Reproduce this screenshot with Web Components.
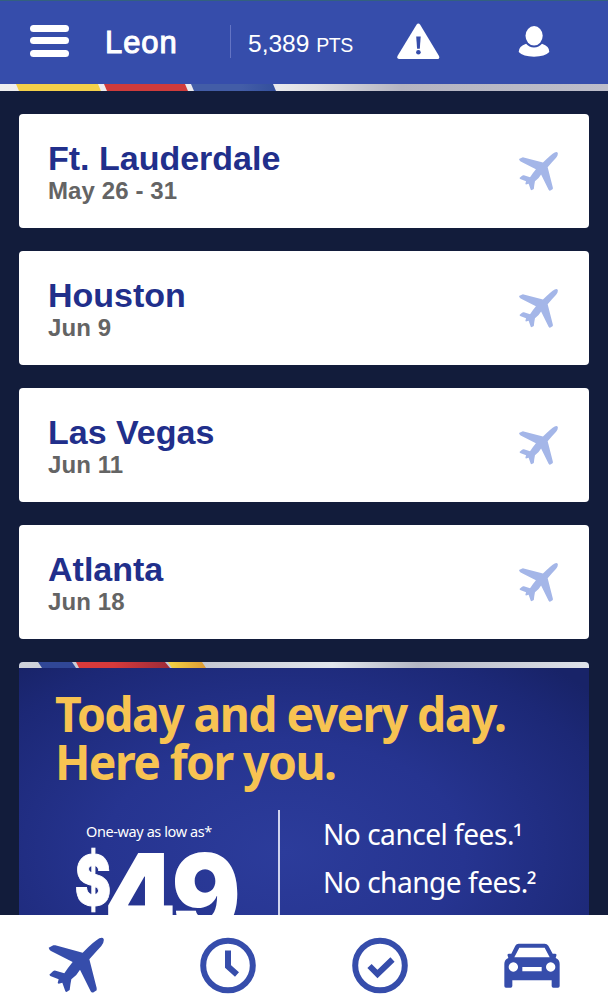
<!DOCTYPE html>
<html lang="en">
<head>
<meta charset="utf-8">
<title>Trips</title>
<style>
    body {
        background: #121c3b;
        font-family: "Liberation Sans", Arial, sans-serif;
        margin: 0;
    }
</style>
</head>
<body>
<trip-app>
    <app-header slot="header" name="Leon" points="5,389"></app-header>
    <trip-card city="Ft. Lauderdale" dates="May 26 - 31"></trip-card>
    <trip-card city="Houston" dates="Jun 9"></trip-card>
    <trip-card city="Las Vegas" dates="Jun 11"></trip-card>
    <trip-card city="Atlanta" dates="Jun 18"></trip-card>
    <promo-banner>
        <span slot="line1">Today and every day.</span>
        <span slot="line2">Here for you.</span>
    </promo-banner>
    <tab-bar slot="footer"></tab-bar>
</trip-app>

<script>
const PLANE_PATH = "M251 57Q248 51 238 55Q223 63 188 98L106 76Q103 75 100 76L86 83Q88 90 93 93L158 126Q144 143 133 160L107 152Q102 151 99 154L88 164L91 168L116 178L113 189L116 191L127 188L136 214Q139 218 143 214L149 210Q151 193 154 178Q170 167 180 149L212 214Q216 220 222 216L230 211L230 204L208 118Q229 94 244 78Q253 67 251 57Z";

class TripApp extends HTMLElement {
    constructor() {
        super();
        this.attachShadow({mode: 'open'});
        this.shadowRoot.innerHTML = `
<style>
    :host {
        display: flex;
        flex-direction: column;
        height: 1004px;
        overflow: hidden;
        width: 608px;
    }

    main {
        display: flex;
        flex: 1;
        flex-direction: column;
        gap: 23px;
        min-height: 0;
        overflow: hidden;
        padding: 23px 19px 0;
    }
</style>
<slot name="header"></slot>
<main><slot></slot></main>
<slot name="footer"></slot>`;
    }
}

class AppHeader extends HTMLElement {
    constructor() {
        super();
        this.attachShadow({mode: 'open'});
        this.shadowRoot.innerHTML = `
<style>
    :host {
        color: #fff;
        display: block;
        flex: none;
    }

    .bar {
        background: #364dab;
        border-top: 1px solid #33617f;
        box-sizing: border-box;
        display: grid;
        grid-template-columns: 30px 75px 125px 167px 121px auto;
        height: 84px;
    }

    .menu {
        display: grid;
        gap: 5.5px;
        grid-column: 2;
        grid-auto-rows: 7px;
        padding-top: 23.5px;
        width: 39px;
    }

    .menu i {
        background: #fff;
        border-radius: 4px;
    }

    .name {
        -webkit-text-stroke: 1px #fff;
        font-size: 31px;
        letter-spacing: 0.9px;
        line-height: 36px;
        padding-top: 24px;
    }

    .points {
        border-left: 1px solid #6474c4;
        font-size: 24.5px;
        height: 33px;
        line-height: 38px;
        margin-top: 24px;
        padding-left: 17px;
        white-space: nowrap;
    }

    small {
        font-size: 19.5px;
        letter-spacing: -0.4px;
    }

    svg {
        display: block;
        fill: #fff;
    }

    .alert { margin-top: 22px; }
    .person { margin-top: 24px; }
    .stripe { height: 7px; width: 608px; }
</style>
<div class="bar">
    <div class="menu"><i></i><i></i><i></i></div>
    <div class="name"></div>
    <div class="points"><span></span> <small>PTS</small></div>
    <svg class="alert" width="43" height="36" viewBox="0 0 43 36">
        <path d="M19.5 1.7Q21.3-.8 23.2 1.7L42 33Q43 35.8 40.5 36H2Q-.3 35.8.5 33Z"/>
        <path fill="#364dab" d="M19.2 13.5h4.5l-.9 12.2h-2.7z"/>
        <circle fill="#364dab" cx="21.4" cy="29.3" r="2.3"/>
    </svg>
    <svg class="person" width="32" height="33" viewBox="0 0 32 33">
        <ellipse cx="16.1" cy="10.8" rx="8.6" ry="9.7"/>
        <path d="M8.1 18.7Q11 22.3 16 22.6Q21 22.3 24 18.7Q31.5 21 31.3 27Q27 31.6 16 31.7Q5 31.6.7 27Q.7 21 8.1 18.7Z"/>
    </svg>
</div>
<svg class="stripe" viewBox="0 0 608 7">
    <defs>
        <linearGradient id="silver">
            <stop offset="0" stop-color="#efeff0"/>
            <stop offset=".46" stop-color="#e9e9ec"/>
            <stop offset=".52" stop-color="#dedee2"/>
            <stop offset=".66" stop-color="#b4b4c1"/>
            <stop offset="1" stop-color="#bdbdca"/>
        </linearGradient>
        <linearGradient id="blue">
            <stop offset="0" stop-color="#435da7"/>
            <stop offset=".6" stop-color="#435da7"/>
            <stop offset="1" stop-color="#334f9c"/>
        </linearGradient>
    </defs>
    <path fill="url(#silver)" d="M0 0H608V7H0z"/>
    <path fill="#f3d04a" d="M16 0H98l3 7H19z"/>
    <path fill="#cf3b3b" d="M104 0h81l3 7h-81z"/>
    <path fill="url(#blue)" d="M191 0h82l3 7h-82z"/>
</svg>`;
    }

    connectedCallback() {
        this.shadowRoot.querySelector(".name").innerText = this.getAttribute("name");
        this.shadowRoot.querySelector(".points span").innerText = this.getAttribute("points");
    }
}

class TripCard extends HTMLElement {
    constructor() {
        super();
        this.attachShadow({mode: 'open'});
        this.shadowRoot.innerHTML = `
<style>
    :host {
        background: #fff;
        border-radius: 4px;
        box-sizing: border-box;
        display: flex;
        flex: none;
        height: 114px;
        justify-content: space-between;
        padding: 25px 31px 0 29px;
    }

    .city {
        color: #212f8b;
        font-size: 34px;
        font-weight: bold;
        line-height: 38px;
    }

    .dates {
        color: #646464;
        font-size: 24px;
        font-weight: bold;
        letter-spacing: 0.1px;
        line-height: 28px;
    }

    svg {
        fill: #a4b6e8;
        margin-top: 13px;
    }
</style>
<div>
    <div class="city"></div>
    <div class="dates"></div>
</div>
<svg width="39" height="39" viewBox="86 53 166 166"><path d="${PLANE_PATH}"/></svg>`;
    }

    connectedCallback() {
        this.shadowRoot.querySelector(".city").innerText = this.getAttribute("city");
        this.shadowRoot.querySelector(".dates").innerText = this.getAttribute("dates");
    }
}

class PromoBanner extends HTMLElement {
    constructor() {
        super();
        this.attachShadow({mode: 'open'});
        this.shadowRoot.innerHTML = `
<style>
    :host {
        background: radial-gradient(ellipse 400px 250px at 265px 190px, #2c3c9b 0%, #263490 45%, #1c2876 85%, #182368 100%);
        border-radius: 4px 4px 0 0;
        color: #fff;
        display: block;
        flex: none;
        font-family: "Noto Sans", sans-serif;
        height: 300px;
        overflow: hidden;
    }

    .stripe {
        display: block;
        height: 6px;
        width: 570px;
    }

    h2 {
        color: #f7c352;
        font-size: 47.5px;
        font-weight: 700;
        letter-spacing: -1.6px;
        line-height: 48px;
        margin: 0;
        padding: 22px 0 0 36px;
        white-space: nowrap;
    }

    h2 div {
        transform: scaleX(0.975);
        transform-origin: 0 0;
    }

    .offer {
        display: grid;
        grid-template-columns: 261px auto;
        margin-top: 24px;
    }

    .fare {
        border-right: 2px solid #cfd3ee;
        box-sizing: border-box;
        height: 140px;
    }

    .label {
        font-size: 14.5px;
        letter-spacing: -0.4px;
        line-height: 20px;
        padding: 11px 0 0 67px;
    }

    .price {
        display: flex;
        font-family: Inter, sans-serif;
        font-weight: 900;
        padding-left: 56px;
    }

    .currency {
        -webkit-text-stroke: 1px #fff;
        font-size: 69px;
        line-height: 70px;
        margin-top: 4px;
        transform: scaleX(0.78);
        transform-origin: 0 0;
        width: 29px;
    }

    .amount {
        font-size: 114px;
        letter-spacing: -5px;
        line-height: 110px;
        margin-top: -1px;
        transform: scaleX(0.9);
        transform-origin: 0 0;
    }

    .perks {
        font-size: 28.5px;
        letter-spacing: -0.5px;
        line-height: 48px;
        padding-left: 43px;
        transform: scaleX(0.985);
        transform-origin: 43px 0;
    }

    .perks span {
        line-height: 0;
        margin-left: -1px;
        vertical-align: -3px;
    }
</style>
<svg class="stripe" viewBox="0 0 570 6">
    <defs>
        <linearGradient id="silver">
            <stop offset="0" stop-color="#cfd3da"/>
            <stop offset=".3" stop-color="#c2c4cf"/>
            <stop offset=".55" stop-color="#e2e7ed"/>
            <stop offset=".7" stop-color="#b4b7c4"/>
            <stop offset="1" stop-color="#dfe3ea"/>
        </linearGradient>
        <linearGradient id="red">
            <stop offset="0" stop-color="#d93a3b"/>
            <stop offset=".4" stop-color="#d63a3b"/>
            <stop offset="1" stop-color="#9c2b39"/>
        </linearGradient>
        <linearGradient id="gold">
            <stop offset="0" stop-color="#f3d443"/>
            <stop offset="1" stop-color="#dd9a35"/>
        </linearGradient>
    </defs>
    <path fill="url(#silver)" d="M0 0H570V6H0z"/>
    <path fill="#304796" d="M19 0h34l4 6H23z"/>
    <path fill="url(#red)" d="M57 0h89l5 6H60z"/>
    <path fill="url(#gold)" d="M149 0h34l4 6h-34z"/>
</svg>
<h2>
    <div><slot name="line1"></slot></div>
    <div><slot name="line2"></slot></div>
</h2>
<div class="offer">
    <div class="fare">
        <div class="label">One-way as low as*</div>
        <div class="price"><span class="currency">$</span><span class="amount">49</span></div>
    </div>
    <div class="perks">
        <div>No cancel fees.<span>¹</span></div>
        <div>No change fees.<span>²</span></div>
    </div>
</div>`;
    }
}

class TabBar extends HTMLElement {
    constructor() {
        super();
        this.attachShadow({mode: 'open'});
        this.shadowRoot.innerHTML = `
<style>
    :host {
        background: #fff;
        box-sizing: border-box;
        color: #364dab;
        display: grid;
        flex: none;
        grid-template-columns: repeat(4, 152px);
        height: 89px;
        justify-items: center;
        padding-top: 22px;
    }

    svg {
        display: block;
        fill: currentColor;
    }

    .ring {
        fill: none;
        stroke: currentColor;
        stroke-width: 6;
    }
</style>
<svg width="56" height="57" viewBox="84 51 168 171"><path d="${PLANE_PATH}"/></svg>
<svg width="56" height="57" viewBox="0 0 56 57">
    <circle class="ring" cx="28" cy="28.5" r="24.8"/>
    <path class="ring" d="M28 13.5V29.5L37 37.5"/>
</svg>
<svg width="56" height="57" viewBox="0 0 56 57">
    <circle class="ring" cx="28" cy="28.5" r="24.8"/>
    <path class="ring" d="M17.5 29L25.5 37L40.5 22.5"/>
</svg>
<svg width="56" height="57" viewBox="78 51 168 171">
    <path fill-rule="evenodd" d="M122 71H200Q207 71 211 77L224 101H232Q237 102 235 107L233 114Q245 119 245 132V198Q245 203 240 203H226Q221 203 221 198V181H103V198Q103 203 98 203H84Q79 203 79 198V132Q79 119 91 114L89 107Q87 102 92 101H100L112 77Q115 71 122 71ZM124 83L109 112H215L200 83ZM133 141V154H191V141ZM106 127a14 14 0 1 0 .1 0ZM218 127a14 14 0 1 0 .1 0Z"/>
</svg>`;
    }
}

customElements.define('trip-app', TripApp);
customElements.define('app-header', AppHeader);
customElements.define('trip-card', TripCard);
customElements.define('promo-banner', PromoBanner);
customElements.define('tab-bar', TabBar);
</script>
</body>
</html>
